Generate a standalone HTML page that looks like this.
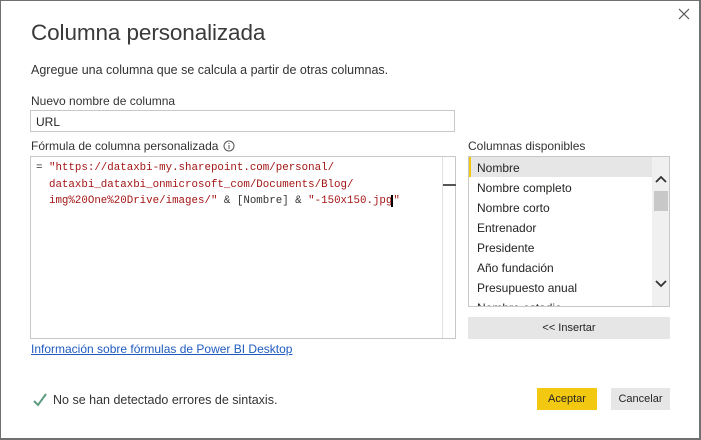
<!DOCTYPE html>
<html><head><meta charset="utf-8"><style>
*{margin:0;padding:0;box-sizing:border-box}
body{width:701px;height:440px;overflow:hidden;background:#fff;font-family:"Liberation Sans",sans-serif;color:#252423;position:relative}
.a{position:absolute;white-space:nowrap}
.frame{position:absolute;left:0;top:0;width:701px;height:440px;border:1px solid #707070;border-bottom-width:2px;border-right-width:2px}
.lbl{font-size:12px;color:#333}
.mono{font-family:"Liberation Mono",monospace;font-size:10.8px;color:#a31515}
.it{position:absolute;left:8px;font-size:12px;color:#252423}
</style></head><body>
<div class="frame"></div>
<svg class="a" style="left:677px;top:7px" width="14" height="14"><path d="M2 2L12 12M12 2L2 12" stroke="#555" stroke-width="1.2"/></svg>
<div class="a" style="left:31px;top:20px;font-size:22.5px;color:#3a3a3a;letter-spacing:-0.1px">Columna personalizada</div>
<div class="a" style="left:31px;top:63px;font-size:12.5px;color:#333">Agregue una columna que se calcula a partir de otras columnas.</div>
<div class="a lbl" style="left:31px;top:94px">Nuevo nombre de columna</div>
<div class="a" style="left:30px;top:110px;width:425px;height:22px;border:1px solid #c8c8c8;font-size:12px;padding:4px 0 0 5px;color:#252423">URL</div>
<div class="a lbl" style="left:31px;top:139px">Fórmula de columna personalizada</div>
<svg class="a" style="left:223px;top:140px" width="12" height="12"><circle cx="6" cy="6" r="5" fill="none" stroke="#555" stroke-width="1"/><path d="M6 5v4M6 3v1" stroke="#555" stroke-width="1"/></svg>
<div class="a" style="left:30px;top:156px;width:426px;height:183px;border:1px solid #c8c8c8"></div>
<div class="a" style="left:442px;top:157px;width:1px;height:181px;background:#e0e0e0"></div>
<div class="a" style="left:443px;top:184px;width:13px;height:2px;background:#555"></div>
<div class="a mono" style="left:36px;top:160px;line-height:16.5px"><span style="color:#333">=</span> "https://dataxbi-my.sharepoint.com/personal/<br>&nbsp;&nbsp;dataxbi_dataxbi_onmicrosoft_com/Documents/Blog/<br>&nbsp;&nbsp;img%20One%20Drive/images/" <span style="color:#333">&amp; [Nombre] &amp;</span> "-150x150.jpg<span style="border-left:2px solid #000;margin-left:-1px"></span>"</div>
<div class="a" style="left:31px;top:342px;font-size:12px;color:#1f5bbf;text-decoration:underline">Información sobre fórmulas de Power BI Desktop</div>
<div class="a lbl" style="left:468px;top:139px">Columnas disponibles</div>
<div class="a" style="left:468px;top:156px;width:202px;height:151px;border:1px solid #c8c8c8;overflow:hidden">
<div style="position:absolute;left:0;top:0;width:183px;height:20px;background:#e6e6e6;border-left:2px solid #f2c811"></div>
<div class="it" style="top:4px">Nombre</div>
<div class="it" style="top:24px">Nombre completo</div>
<div class="it" style="top:44px">Nombre corto</div>
<div class="it" style="top:64px">Entrenador</div>
<div class="it" style="top:84px">Presidente</div>
<div class="it" style="top:104px">Año fundación</div>
<div class="it" style="top:124px">Presupuesto anual</div>
<div class="it" style="top:144px">Nombre estadio</div>
<div style="position:absolute;left:183px;top:0;width:18px;height:149px;background:#f0f0f0"></div>
<svg style="position:absolute;left:185px;top:17px" width="14" height="10"><path d="M2 8L7 3L12 8" fill="none" stroke="#333" stroke-width="1.8"/></svg>
<div style="position:absolute;left:185px;top:34px;width:14px;height:20px;background:#c8c8c8"></div>
<svg style="position:absolute;left:185px;top:122px" width="14" height="10"><path d="M2 2L7 7L12 2" fill="none" stroke="#333" stroke-width="1.8"/></svg>
</div>
<div class="a" style="left:468px;top:317px;width:202px;height:22px;background:#e6e6e6;font-size:11px;text-align:center;line-height:22px;color:#252423">&lt;&lt; Insertar</div>
<svg class="a" style="left:32px;top:392px" width="16" height="16"><path d="M2 9L6 13L14 2" fill="none" stroke="#5c9e7f" stroke-width="2"/></svg>
<div class="a" style="left:53px;top:393px;font-size:12.5px;color:#333">No se han detectado errores de sintaxis.</div>
<div class="a" style="left:537px;top:388px;width:60px;height:22px;background:#f2c811;font-size:11px;text-align:center;line-height:22px;color:#252423">Aceptar</div>
<div class="a" style="left:611px;top:388px;width:59px;height:22px;background:#e6e6e6;font-size:11px;text-align:center;line-height:22px;color:#252423">Cancelar</div>
</body></html>
